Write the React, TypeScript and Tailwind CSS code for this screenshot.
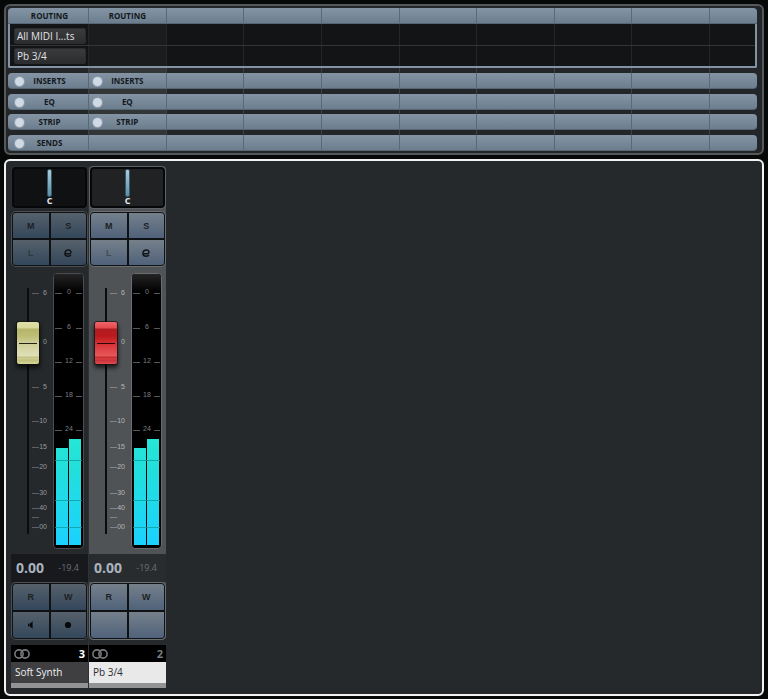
import type { ReactNode } from "react";
import { clsx } from "clsx";

interface Channel {
  name: string;
  number: number;
  peak: string;
  selected: boolean;
  cap: "yellow" | "red";
  monitor: boolean;
}

const channels: Channel[] = [
  { name: "Soft Synth", number: 3, peak: "-19.4", selected: false, cap: "yellow", monitor: true },
  { name: "Pb 3/4", number: 2, peak: "-19.4", selected: true, cap: "red", monitor: false },
];

const columns = [0, 1, 2, 3, 4, 5, 6, 7, 8, 9];

const faderMarks = [
  { y: 26, label: "6" },
  { y: 75, label: "0" },
  { y: 120, label: "5" },
  { y: 154, label: "10" },
  { y: 180, label: "15" },
  { y: 200, label: "20" },
  { y: 226, label: "30" },
  { y: 241, label: "40" },
  { y: 250, label: "" },
  { y: 260, label: "00" },
];

const meterMarks = [
  { y: 19, label: "0" },
  { y: 54, label: "6" },
  { y: 88, label: "12" },
  { y: 122, label: "18" },
  { y: 156, label: "24" },
];

function RackRow({
  className,
  cellClassName,
  selectedClassName,
  children,
}: {
  className?: string;
  cellClassName: string;
  selectedClassName?: string;
  children?: (column: number) => ReactNode;
}) {
  return (
    <div className={clsx("grid grid-cols-[80px_repeat(8,minmax(0,1fr))_48px]", className)}>
      {columns.map((column) => (
        <div
          key={column}
          className={clsx("min-w-0", column > 0 && "border-l", cellClassName, column === 1 && selectedClassName)}
        >
          {children?.(column)}
        </div>
      ))}
    </div>
  );
}

function RackGap({ className }: { className: string }) {
  return <RackRow className={className} cellClassName="border-[#3d4143]" selectedClassName="bg-[#333637]" />;
}

function RackBar({ label, used, led = true }: { label: string; used: number; led?: boolean }) {
  return (
    <RackRow
      className={clsx(
        "h-4 overflow-hidden border-b border-[#566675] bg-linear-to-b from-[#8494a4] to-[#6c7e8e]",
        led ? "rounded-sm" : "rounded-t-sm",
      )}
      cellClassName="border-[#5a6977]"
    >
      {(column) =>
        column < used && (
          <div className="relative flex h-4 items-center justify-center">
            {led && (
              <button
                type="button"
                aria-label={`Bypass ${label.toLowerCase()}`}
                className={clsx(
                  "absolute h-[9px] w-[9px] rounded-full bg-[#d0dae5] ring-1 ring-[#8f9cab]",
                  column === 0 ? "left-[7px]" : "left-1",
                )}
              />
            )}
            <span className={clsx("text-[8px] leading-4 font-bold text-[#14181c]", column === 0 && "pl-[3px]")}>
              {label}
            </span>
          </div>
        )
      }
    </RackRow>
  );
}

function RoutingSlot({ label }: { label: string }) {
  return (
    <button
      type="button"
      className="ml-1 block h-4 w-[72px] truncate rounded-xs border border-[#2b2c2e] bg-linear-to-b from-[#3a3b3d] to-[#2c2d2f] px-[2px] text-left text-[10px] leading-[14px] text-[#e0e4e8]"
    >
      {label}
    </button>
  );
}

function Rack() {
  return (
    <section
      aria-label="Channel racks"
      className="rounded-md border-2 border-[#55585a] bg-[#232628] py-[2px] pr-[5px] pl-[2px]"
    >
      <RackBar label="ROUTING" used={2} led={false} />
      <div className="rounded-b-xs border-x-2 border-b-2 border-[#8493a4] bg-[#131416]">
        <RackRow
          className="-mx-[2px] h-[21px]"
          cellClassName="border-[#232527] pt-1 pl-[2px]"
          selectedClassName="bg-[#1b1c1d]"
        >
          {(column) => column === 0 && <RoutingSlot label="All MIDI I...ts" />}
        </RackRow>
        <div className="h-px bg-[#333537]" />
        <RackRow
          className="-mx-[2px] h-5"
          cellClassName="border-[#232527] pt-[2px] pl-[2px]"
          selectedClassName="bg-[#1b1c1d]"
        >
          {(column) => column === 0 && <RoutingSlot label="Pb 3/4" />}
        </RackRow>
      </div>
      <RackGap className="h-[5px]" />
      <RackBar label="INSERTS" used={2} />
      <RackGap className="h-[5px]" />
      <RackBar label="EQ" used={2} />
      <RackGap className="h-1" />
      <RackBar label="STRIP" used={2} />
      <RackGap className="h-[5px]" />
      <RackBar label="SENDS" used={1} />
    </section>
  );
}

function PadButton({
  label,
  selected,
  dim,
  children,
}: {
  label: string;
  selected: boolean;
  dim?: boolean;
  children?: ReactNode;
}) {
  return (
    <button
      type="button"
      aria-label={label}
      className={clsx(
        "flex items-center justify-center bg-linear-to-b font-['Liberation_Sans',sans-serif] text-[9px] leading-3 font-bold",
        selected ? "from-[#75808b] to-[#50627a]" : "from-[#56616b] to-[#34475b]",
        dim ? (selected ? "text-[#454b50]" : "text-[#2f373e]") : "text-[#1c1f22]",
      )}
    >
      {children}
    </button>
  );
}

function Pad({ selected, className, children }: { selected: boolean; className: string; children: ReactNode }) {
  return (
    <div className={clsx("rounded-[5px] border", selected ? "border-[#6c6f72]" : "border-[#4c4f51]", className)}>
      <div className="grid h-full grid-cols-2 grid-rows-2 gap-[2px] overflow-hidden rounded-sm border border-[#0f1214] bg-[#0f1214]">
        {children}
      </div>
    </div>
  );
}

function EditIcon() {
  return (
    <svg width="8" height="8" viewBox="0 0 8 8" fill="none" stroke="#12161a" strokeWidth="1.5" aria-hidden="true">
      <path d="M0.6 4.7 H6 C7.4 4.2 7.4 0.9 4.6 0.9 C2.4 0.9 0.9 2.5 0.9 4.4 C0.9 6.3 2.2 7.2 3.9 7.2 C5.2 7.2 6.2 6.8 6.9 6.1" />
    </svg>
  );
}

function SpeakerIcon() {
  return (
    <svg width="8" height="8" viewBox="0 0 8 8" fill="#08090a" aria-hidden="true">
      <rect x="1" y="2.6" width="1.6" height="2.8" />
      <path d="M3 2.6 L5.6 0.2 V7.8 L3 5.4 Z" />
    </svg>
  );
}

function RecordIcon() {
  return (
    <svg width="8" height="8" viewBox="0 0 8 8" fill="#08090a" aria-hidden="true">
      <circle cx="4" cy="4" r="3.1" />
    </svg>
  );
}

function StereoIcon({ color }: { color: string }) {
  return (
    <svg width="16" height="10" viewBox="0 0 16 10" fill="none" stroke={color} strokeWidth="1.6" aria-hidden="true">
      <circle cx="5" cy="5" r="4.1" />
      <circle cx="11" cy="5" r="4.1" />
    </svg>
  );
}

function Pan({ selected }: { selected: boolean }) {
  return (
    <div
      className={clsx(
        "mx-px mt-px flex h-[41px] flex-col items-center rounded border-2 border-[#060708] ring-1",
        selected ? "bg-[#212224] ring-[#5f6265]" : "bg-[#101113] ring-[#2b2e30]",
      )}
    >
      <input
        type="range"
        aria-label="Pan"
        defaultValue={50}
        className="h-7 w-full appearance-none bg-transparent [&::-webkit-slider-thumb]:h-7 [&::-webkit-slider-thumb]:w-[5px] [&::-webkit-slider-thumb]:appearance-none [&::-webkit-slider-thumb]:rounded-xs [&::-webkit-slider-thumb]:border [&::-webkit-slider-thumb]:border-[#3c5866] [&::-webkit-slider-thumb]:bg-linear-to-b [&::-webkit-slider-thumb]:from-[#a9cddd] [&::-webkit-slider-thumb]:to-[#5490a8]"
      />
      <span className="text-[9px] leading-[7px] font-bold text-[#e4eaf0]">C</span>
    </div>
  );
}

const capStyles = {
  yellow:
    "[&::-webkit-slider-thumb]:bg-[linear-gradient(#24241a,#24241a),linear-gradient(#dfdfa8_0px,#d9d99a_6px,#b6b66a_7px,#bdbd74_14px,#cfcf98_21px,#dfdfb8_34px,#c2c182_35px,#d0cf94_37px,#bfbe78_38px,#d6d59a_42px)]",
  red: "[&::-webkit-slider-thumb]:bg-[linear-gradient(#2a0506,#2a0506),linear-gradient(#f0666a_0px,#e4484d_6px,#b01c20_7px,#bb1a1e_14px,#d62f33_21px,#e8585b_34px,#c02a2e_35px,#dc3e42_37px,#c4303a_38px,#e24c50_42px)]",
};

function Fader({ selected, cap }: { selected: boolean; cap: Channel["cap"] }) {
  const ink = selected ? "#b2b6ba" : "#9599a0";
  return (
    <div className="relative h-[287px] w-[42px]">
      <svg width="42" height="287" fontFamily="'Liberation Sans', sans-serif" fontSize="7" aria-hidden="true">
        <rect x="16" y="21" width="2" height="246" fill="#0b0c0d" />
        {faderMarks.map(({ y, label }) => (
          <g key={y}>
            {label !== "0" && <rect x="21" y={y} width="7" height="1" fill={ink} opacity="0.5" />}
            <text x="36" y={y + 2} textAnchor="end" fill={ink}>
              {label}
            </text>
          </g>
        ))}
      </svg>
      <input
        type="range"
        aria-label="Level"
        max={1000}
        defaultValue={833}
        className={clsx(
          "absolute top-[21px] left-[6px] h-[246px] w-[22px] appearance-none bg-transparent [direction:rtl] [writing-mode:vertical-lr]",
          "[&::-webkit-slider-thumb]:h-[42px] [&::-webkit-slider-thumb]:w-[22px] [&::-webkit-slider-thumb]:appearance-none [&::-webkit-slider-thumb]:rounded-xs",
          "[&::-webkit-slider-thumb]:bg-[length:18px_1px,100%_100%] [&::-webkit-slider-thumb]:bg-center [&::-webkit-slider-thumb]:bg-no-repeat",
          "[&::-webkit-slider-thumb]:shadow-[0_0_0_1px_#101010aa,0_3px_4px_1px_#000000aa]",
          capStyles[cap],
        )}
      />
    </div>
  );
}

function Meter({ selected, id }: { selected: boolean; id: string }) {
  return (
    <div
      role="meter"
      aria-label="Output level"
      aria-valuemin={-60}
      aria-valuemax={0}
      aria-valuenow={-24}
      className={clsx(
        "mt-[6px] h-[276px] w-[31px] overflow-hidden rounded border bg-black",
        selected ? "border-[#6a6c6f]" : "border-[#4a4c4f]",
      )}
    >
      <svg width="29" height="274" fontFamily="'Liberation Sans', sans-serif" fontSize="7" aria-hidden="true">
        <defs>
          <linearGradient id={`${id}-level`} gradientUnits="userSpaceOnUse" x1="0" y1="165" x2="0" y2="272">
            <stop offset="0" stopColor="#25e6d6" />
            <stop offset="0.3" stopColor="#22dfdc" />
            <stop offset="1" stopColor="#1ad2ff" />
          </linearGradient>
          <linearGradient id={`${id}-top`} x1="0" y1="0" x2="0" y2="1">
            <stop offset="0" stopColor="#242424" />
            <stop offset="1" stopColor="#000000" />
          </linearGradient>
        </defs>
        <rect width="29" height="18" fill={`url(#${id}-top)`} />
        {meterMarks.map(({ y, label }) => (
          <g key={y} fill="#55595d">
            <rect x="1" y={y} width="7" height="1" />
            <rect x="22" y={y} width="6" height="1" />
            <text x="15" y={y + 1} textAnchor="middle" fill="#7c8085">
              {label}
            </text>
          </g>
        ))}
        <rect x="2" y="174" width="12" height="97" fill={`url(#${id}-level)`} />
        <rect x="15" y="165" width="12" height="106" fill={`url(#${id}-level)`} />
        {[186, 226, 253].map((y) => (
          <rect key={y} x="1" y={y} width="27" height="1" fill="#159c9f" opacity="0.8" />
        ))}
      </svg>
    </div>
  );
}

function ChannelStrip({ channel }: { channel: Channel }) {
  const { selected } = channel;
  return (
    <article
      aria-label={channel.name}
      className={clsx("flex flex-col", selected ? "w-[78px] border-l border-[#2f3234]" : "w-[77px]")}
    >
      <div className={clsx("flex flex-col rounded-t-sm rounded-b-sm", selected && "bg-[#505356]")}>
        <Pan selected={selected} />
        <Pad selected={selected} className="mt-[3px] h-14">
          <PadButton label="Mute" selected={selected}>M</PadButton>
          <PadButton label="Solo" selected={selected}>S</PadButton>
          <PadButton label="Listen" selected={selected} dim>L</PadButton>
          <PadButton label="Edit channel settings" selected={selected}>
            <EditIcon />
          </PadButton>
        </Pad>
        <div className="flex">
          <Fader selected={selected} cap={channel.cap} />
          <Meter selected={selected} id={`meter-${channel.number}`} />
        </div>
        <div
          className={clsx(
            "flex h-7 items-center justify-between pr-[9px] pl-[5px]",
            selected ? "bg-[#292c2f]" : "bg-[#18191c]",
          )}
        >
          <span className="text-[14px] leading-4 font-bold text-[#a9b3be]">0.00</span>
          <span className="text-[9px] leading-4 text-[#6b6f74]">{channel.peak}</span>
        </div>
        <Pad selected={selected} className="h-[58px]">
          <PadButton label="Read automation" selected={selected}>R</PadButton>
          <PadButton label="Write automation" selected={selected}>W</PadButton>
          <PadButton label="Monitor" selected={selected}>{channel.monitor && <SpeakerIcon />}</PadButton>
          <PadButton label="Record enable" selected={selected}>{channel.monitor && <RecordIcon />}</PadButton>
        </Pad>
      </div>
      <div className="mt-[5px] flex h-[17px] items-center justify-between bg-black px-[3px]">
        <StereoIcon color="#77797c" />
        <span className={clsx("text-[11px] leading-4 font-bold", selected ? "text-[#7b7e82]" : "text-white")}>
          {channel.number}
        </span>
      </div>
      <div
        className={clsx(
          "h-[26px] truncate border-b-[5px] border-[#929395] px-1 text-[10px] leading-5",
          selected ? "bg-[#e9e9e9] text-[#2b2d30]" : "bg-[#3f3f42] text-[#eef0f2]",
        )}
      >
        {channel.name}
      </div>
    </article>
  );
}

export default function App() {
  return (
    <main className="flex min-h-screen flex-col gap-1 bg-[#070808] px-1 pt-1 pb-[3px] font-['Open_Sans','Noto_Sans',sans-serif]">
      <Rack />
      <section
        aria-label="Mixer"
        className="flex flex-1 items-start rounded-md border-2 border-[#f2f2f2] bg-[#25292b] pt-[5px] pb-1 pl-[5px]"
      >
        {channels.map((channel) => (
          <ChannelStrip key={channel.name} channel={channel} />
        ))}
      </section>
    </main>
  );
}
